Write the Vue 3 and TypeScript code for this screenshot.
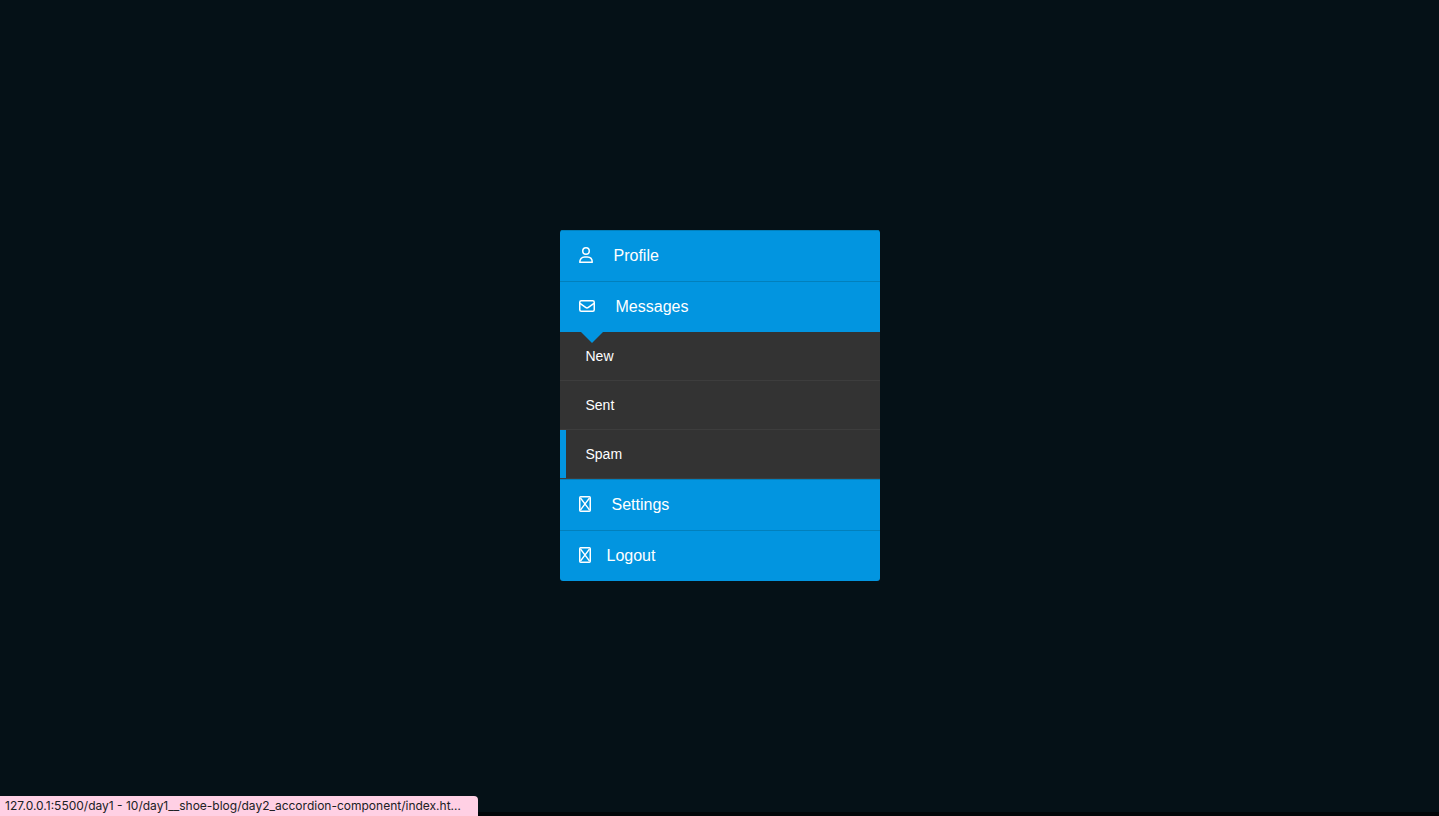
<script setup lang="ts">
import { ref } from 'vue'

type Icon = 'user' | 'mail' | 'missing'

interface Section {
  id: string
  label: string
  icon: Icon
  links: string[]
}

const sections: Section[] = [
  { id: 'profile', label: 'Profile', icon: 'user', links: [] },
  { id: 'messages', label: 'Messages', icon: 'mail', links: ['New', 'Sent', 'Spam'] },
  { id: 'settings', label: 'Settings', icon: 'missing', links: [] },
  { id: 'logout', label: 'Logout', icon: 'missing', links: [] },
]

const open = ref('messages')
const current = ref('Spam')
const statusUrl = '127.0.0.1:5500/day1 - 10/day1__shoe-blog/day2_accordion-component/index.ht…'
</script>

<template>
  <div class="page">
    <main class="stage">
      <ul class="accordion">
        <li v-for="s in sections" :key="s.id" class="section">
          <a
            :href="'#' + s.id"
            class="heading"
            :class="[s.id, { open: open === s.id && s.links.length }]"
            @click.prevent="open = s.id"
          >
            <svg v-if="s.icon === 'user'" class="icon user-icon" viewBox="0 0 14 16" aria-hidden="true">
              <circle cx="7" cy="4" r="3.25" />
              <path d="M.75 15.250c0-3.200 2-5.250 4.850-5.250h2.800c2.850 0 4.850 2.050 4.850 5.250z" />
            </svg>
            <svg v-else-if="s.icon === 'mail'" class="icon mail-icon" viewBox="0 0 16 16" aria-hidden="true">
              <rect x=".75" y="2.750" width="14.500" height="10.500" rx="1.500" />
              <path d="M1 5.300l5.600 4.100a2.300 2.300 0 0 0 2.800 0L15 5.300" />
            </svg>
            <svg v-else class="icon missing-icon" viewBox="0 0 12 16" aria-hidden="true">
              <rect x=".75" y=".75" width="10.500" height="14.500" rx=".9" />
              <path class="thin" d="M1.500 2l9 12M10.500 2l-9 12" />
            </svg>
            <span>{{ s.label }}</span>
          </a>
          <ul v-if="s.links.length && open === s.id" class="submenu">
            <li v-for="link in s.links" :key="link">
              <a href="#messages" class="link" :class="{ current: current === link }" @click.prevent="current = link">{{ link }}</a>
            </li>
          </ul>
        </li>
      </ul>
    </main>
    <div class="edge"></div>
    <div class="status">{{ statusUrl }}</div>
  </div>
</template>

<style>
body {
  margin: 0;
  background: #051117;
}
</style>

<style scoped>
.page {
  min-height: 100vh;
  display: flex;
  flex-direction: column;
  background: #051117;
  font-family: Helvetica, "Liberation Sans", Arial, sans-serif;
}

.stage {
  flex: 1;
  display: flex;
  align-items: center;
  justify-content: center;
  padding-bottom: 1px;
}

.edge {
  height: 4px;
  background: #020609;
}

ul {
  margin: 0;
  padding: 0;
  list-style: none;
}

.accordion {
  width: 320px;
  max-width: 100%;
  overflow: hidden;
  border-radius: 3px;
}

.heading {
  position: relative;
  display: flex;
  align-items: center;
  gap: 21px;
  height: 50px;
  padding: 0 19px;
  border-top: 1px solid #0280bc;
  background: #0295e0;
  color: #fff;
  font-size: 16px;
  text-decoration: none;
}

.logout {
  gap: 16px;
}

.heading.open::after {
  content: "";
  position: absolute;
  z-index: 1;
  top: 100%;
  left: 21px;
  border: 11px solid transparent;
  border-top-color: #0295e0;
  border-bottom-width: 0;
}

.icon {
  flex: none;
  height: 16px;
  margin-bottom: 2px;
  fill: none;
  stroke: #fff;
  stroke-width: 1.5;
  stroke-linejoin: round;
}

.user-icon {
  width: 14px;
}

.mail-icon {
  width: 16px;
}

.missing-icon {
  width: 12px;
}

.thin {
  stroke-width: 1.3;
}

.link {
  display: flex;
  align-items: center;
  height: 48px;
  padding-left: 20px;
  border-left: 6px solid #333;
  background: #333;
  box-shadow: 0 1px #3d3d3d;
  margin-bottom: 1px;
  color: #fff;
  font-size: 14px;
  text-decoration: none;
}

.link.current {
  border-left-color: #0295e0;
}

.status {
  position: fixed;
  left: 0;
  bottom: 0;
  box-sizing: border-box;
  width: 478px;
  max-width: 100%;
  height: 20px;
  padding: 0 12px 0 5px;
  overflow: hidden;
  border-top-right-radius: 4px;
  background: #ffd0e4;
  color: #202124;
  font-family: Inter, sans-serif;
  font-size: 12px;
  line-height: 20px;
  text-overflow: ellipsis;
  white-space: nowrap;
}
</style>
